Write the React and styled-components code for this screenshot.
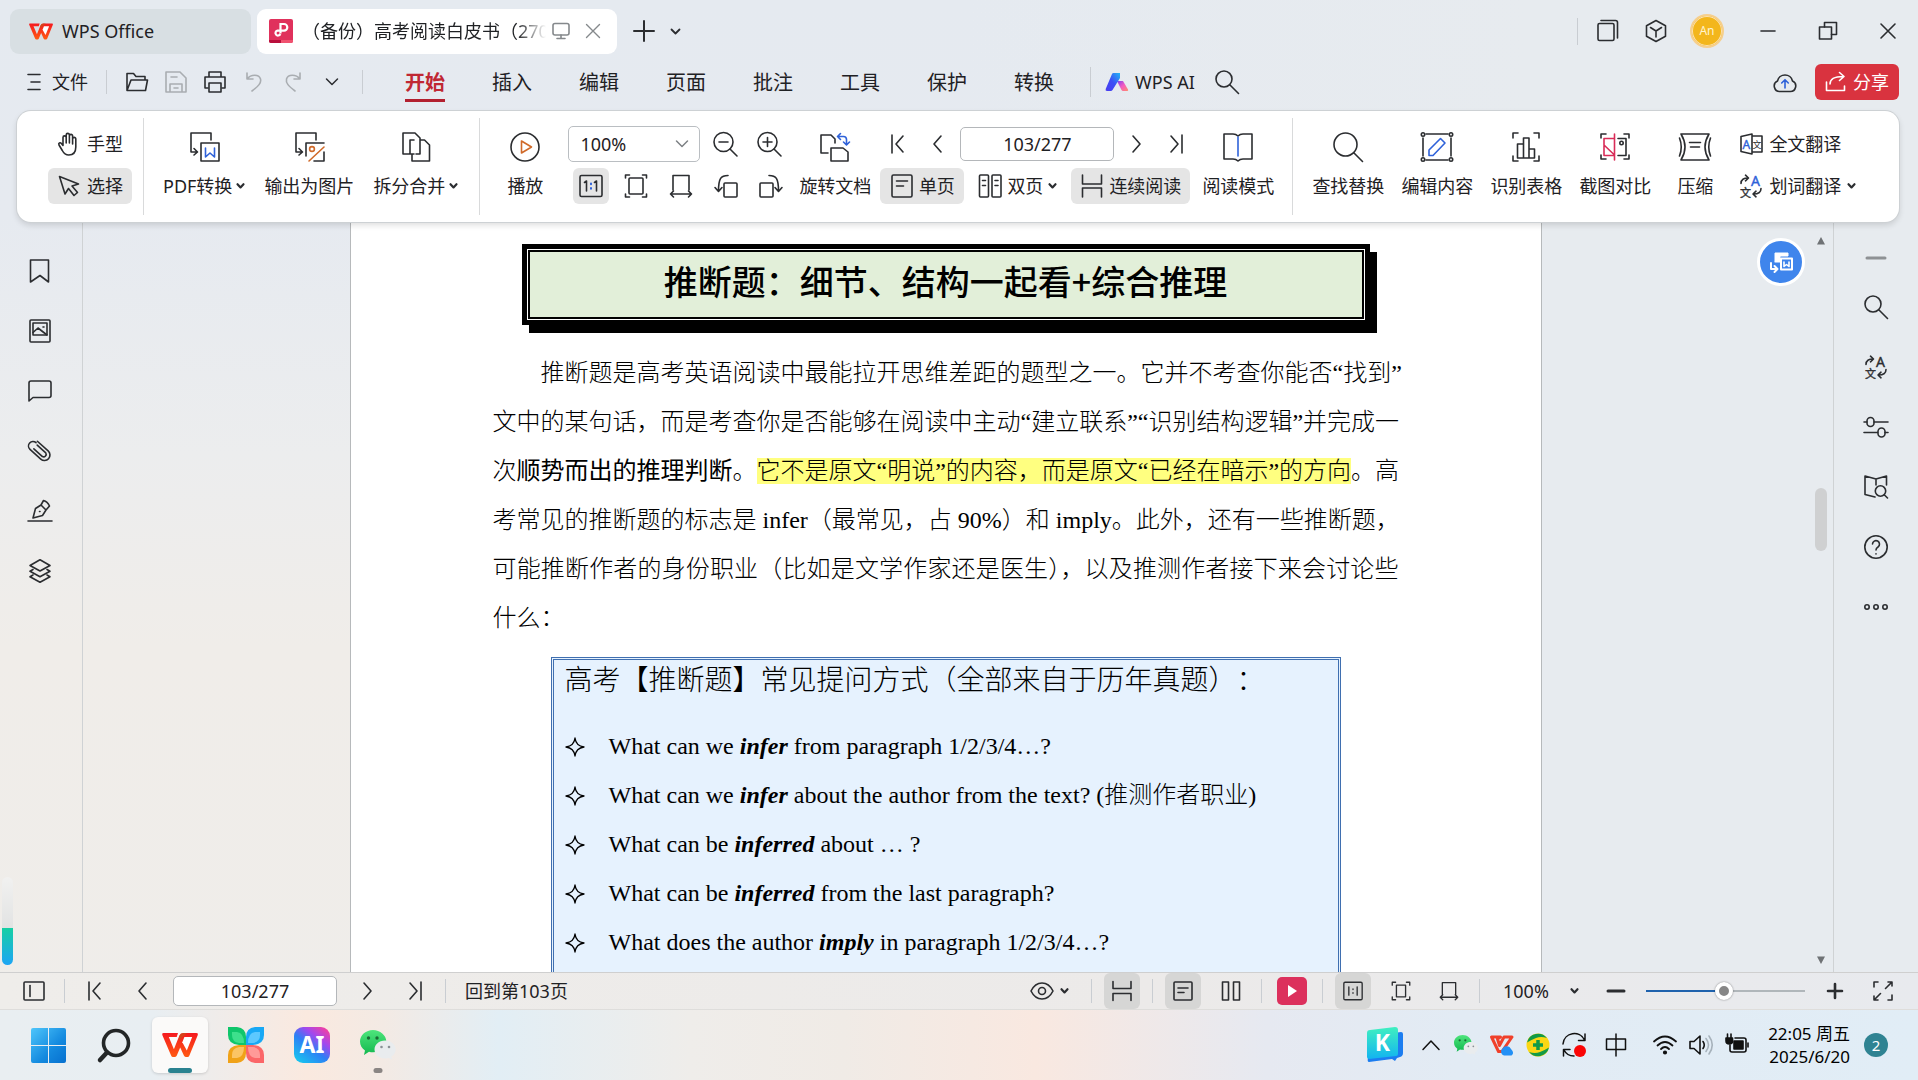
import React from "react";
import styled, { createGlobalStyle } from "styled-components";

const UI = `"Noto Sans", "Noto Sans CJK SC", sans-serif`;
const SERIF = `"Liberation Serif", "Noto Sans CJK SC", serif`;
const INK = "#2b2d30";
const BLUE = "#2f62d9";

const Global = createGlobalStyle`
  * { box-sizing: border-box; }
  body { margin: 0; font-family: ${UI}; font-size: 18px; line-height: 24px; color: #1f2124; overflow: hidden; }
  button, input, select { font: inherit; color: inherit; }
  svg { display: block; flex: none; overflow: visible; }
`;

/* ---------- shared parts ---------- */
const Shell = styled.div`
  display: flex;
  flex-direction: column;
  height: 100vh;
  min-width: 0;
  background:
    linear-gradient(90deg, rgba(231, 235, 240, 0) 50%, #e7ebef 80%),
    linear-gradient(180deg, #e5eaf0 0%, #e6eaf0 20%, #ecedee 42%, #f0ede9 60%, #efedea 100%);
`;
const Spacer = styled.div`flex: 1;`;
const Rule = styled.span`
  flex: none;
  width: 1px;
  height: ${(p) => p.$h || 24}px;
  background: #c9cdd2;
`;
const Btn = styled.button`
  display: inline-flex;
  align-items: center;
  justify-content: center;
  flex: none;
  gap: ${(p) => p.$gap || 6}px;
  min-width: ${(p) => p.$min || 36}px;
  height: 36px;
  padding: 0 ${(p) => p.$px || 0}px;
  border: 0;
  border-radius: 6px;
  background: ${(p) => (p.$on ? p.$onColor || "#e5e5e5" : "transparent")};
  white-space: nowrap;
  line-height: 36px;
`;
const Icon = ({ w = 24, h, vb, c = INK, sw = 1.6, children }) => (
  <svg width={w} height={h || w} viewBox={vb || `0 0 ${w} ${h || w}`} fill="none" stroke={c} strokeWidth={sw} strokeLinejoin="round" strokeLinecap="round" aria-hidden="true">
    {children}
  </svg>
);
const Caret = () => <Icon w={9} h={6} sw={2.2}><path d="M1.500 1.200 4.500 4.400 7.500 1.200" /></Icon>;
const Chevron = ({ c }) => <Icon w={14} h={8} c={c} sw={1.5}><path d="M1.500 1 7 6.500 12.500 1" /></Icon>;

const WpsLogo = ({ w = 24, h = 17 }) => (
  <svg width={w} height={h} viewBox="0 0 36 24" aria-hidden="true">
    <defs>
      <linearGradient id="wl" x1="0" y1="0" x2="0" y2="1"><stop offset="0" stopColor="#f5191f" /><stop offset="1" stopColor="#ff5a12" /></linearGradient>
    </defs>
    <path fill="url(#wl)" d="M1.500 0H16l-1.300 4H6.800l5.100 12.200L17 3.400Q18.400 0 21.500 0H34.500q2 0 1.300 2L27.400 22.500Q26.800 24 25.500 24h-1.800q-1.200 0-1.800-1.400L18.200 14.400l-3.400 8.200Q14.200 24 13 24h-2q-1.300 0-1.900-1.500L.3 2Q-.4 0 1.500 0Z" />
    <path fill="#fff" d="M20.300 9.200 22.400 4h7.800L24.800 17.400Z" />
    <path fill="#c9501a" d="M17 3.400Q18.400 0 21.500 0H25L19.600 5 17.400 8Z" opacity=".75" />
  </svg>
);

/* ---------- glyphs ---------- */
const First = () => <Icon w={18} h={22}><path d="M3 2v18M14 3 7 11l7 8" /></Icon>;
const Prev = () => <Icon w={18} h={22}><path d="M12 3 5 11l7 8" /></Icon>;
const Next = () => <Icon w={18} h={22}><path d="M6 3l7 8-7 8" /></Icon>;
const Last = () => <Icon w={18} h={22}><path d="M15 2v18M4 3l7 8-7 8" /></Icon>;
const OneToOne = () => (
  <Icon w={24}>
    <rect x="1" y="1.500" width="22" height="21" rx="1.500" />
    <path d="M5.500 8.500l2-1.500v10M15.500 8.500l2-1.500v10" />
    <path d="M12 9.500v.8M12 14v.8" stroke={BLUE} strokeWidth="2" />
  </Icon>
);
const FitPage = () => <Icon w={24}><path d="M1.500 4V1h4M18.500 1h4v3M22.500 20v3h-4M5.500 23h-4v-3" /><rect x="5" y="4" width="14" height="16" rx="1" /></Icon>;
const FitWidth = () => <Icon w={24}><path d="M4 16V1.500h16V16M1.500 20h21M4.500 17l-3 3 3 3M19.500 17l3 3-3 3" /></Icon>;
const SinglePage = () => <Icon w={24}><rect x="2" y="1" width="20" height="22" rx="1.500" /><path d="M6.500 7h11M6.500 12h7" /></Icon>;
const TwoPages = () => <Icon w={24}><rect x="1.500" y="1" width="9" height="22" rx="1" /><rect x="14" y="1" width="9" height="22" rx="1" /><path d="M4.500 6.500h3M4.500 11.500h3M17 6.500h3M17 11.500h3" /></Icon>;
const Continuous = () => <Icon w={24}><path d="M2.500 1v9h19V1M2.500 23v-9h19v9" /></Icon>;
const Magnifier = () => <Icon w={24}><circle cx="9" cy="9" r="8" /><path d="M15 15l8.500 8.500" /></Icon>;
const Swap = ({ blue }) => (
  <Icon w={24}>
    <path d="M2 9.500C2 5.500 5 4 9 4M6.500 1.200 9.500 4l-3 2.800M22 14.500c0 4-3 5.500-7.500 5.500M17 17.200 14 20l3 2.800" />
    <text x="12" y="12" fontFamily="Noto Sans" fontSize="14" fill={blue ? BLUE : INK} stroke={blue ? BLUE : INK} strokeWidth=".4">A</text>
    <text x="1" y="22.500" fontFamily="Noto Sans CJK SC" fontSize="11" fill={INK} stroke={INK} strokeWidth=".4">文</text>
  </Icon>
);
const WeChat = ({ w = 36 }) => (
  <svg width={w} height={w} viewBox="0 0 36 36" aria-hidden="true">
    <defs><linearGradient id="wc" x1="0" y1="0" x2="0" y2="1"><stop offset="0" stopColor="#4ee57c" /><stop offset="1" stopColor="#12b84e" /></linearGradient></defs>
    <path fill="url(#wc)" d="M13 3C6 3 0 8 0 14.500c0 3.800 2 7 5 9L4 28l5-3.200c1.300.4 2.600.5 4 .5 7.500 0 13.300-4.600 13.300-10.800S20 3 13 3Z" />
    <circle cx="8.500" cy="11" r="1.700" fill="#1a6b35" /><circle cx="17" cy="11" r="1.700" fill="#1a6b35" />
    <path fill="#e9ecee" d="M25 13.500c-6 0-10.500 4-10.500 9s4.500 9 10.500 9c1.300 0 2.500-.2 3.600-.6l3.400 1.600-.7-3c2.700-1.600 4.400-4 4.400-7 0-5-4.700-9-10.700-9Z" />
    <circle cx="21.500" cy="20" r="1.300" fill="#8a9096" /><circle cx="29" cy="20" r="1.300" fill="#8a9096" />
  </svg>
);

/* ---------- title bar ---------- */
const TitleBar = styled.header`
  display: flex;
  align-items: center;
  height: 62px;
  padding: 0 6px 0 10px;
`;
const HomeTab = styled.button`
  display: flex;
  align-items: center;
  gap: 9px;
  width: 241px;
  height: 45px;
  padding: 0 19px;
  border: 0;
  border-radius: 9px;
  background: #d8dfe3;
`;
const DocTab = styled.div`
  display: flex;
  align-items: center;
  width: 360px;
  height: 45px;
  margin: 0 9px 0 6px;
  padding: 0 11px 0 12px;
  border-radius: 9px;
  background: #fff;
`;
const DocName = styled.span`
  flex: 1;
  margin: 0 6px 0 9px;
  overflow: hidden;
  white-space: nowrap;
  mask-image: linear-gradient(90deg, #000 88%, transparent 100%);
`;
const TabTools = styled.div`
  display: flex;
  align-items: center;
  gap: 10px;
`;
const Avatar = styled.span`
  display: flex;
  align-items: center;
  justify-content: center;
  width: 34px;
  height: 34px;
  margin: 0 8px 0 4px;
  border: 2px solid #f6cf8d;
  border-radius: 50%;
  background: #f3b61c;
  box-shadow: inset 0 0 0 1px #fbe3b4;
  color: #fff3cf;
  font-size: 12px;
`;
const WindowActions = styled.div`
  display: flex;
  align-items: center;
  gap: 12px;
`;

/* ---------- menu ---------- */
const MenuBar = styled.nav`
  display: flex;
  align-items: center;
  height: 40px;
  padding: 0 19px 0 28px;
`;
const FileBtn = styled(Btn)`gap: 12px; margin-right: 18px;`;
const QuickTools = styled.div`
  display: flex;
  gap: 3px;
  margin: 0 12px;
`;
const Tabs = styled.div`
  display: flex;
  gap: 47px;
  margin: 0 36px 0 42px;
`;
const Tab = styled.button`
  height: 40px;
  padding: 2px 0 0;
  border: 0;
  background: linear-gradient(${(p) => (p.$on ? "#b3202f, #b3202f" : "transparent, transparent")}) 0 100% / 100% 3px no-repeat;
  color: ${(p) => (p.$on ? "#c02733" : "inherit")};
  font-size: 20px;
  font-weight: ${(p) => (p.$on ? 700 : 400)};
`;
const Share = styled(Btn)`
  width: 84px;
  margin-left: 12px;
  background: #d9333f;
  color: #fff;
`;

/* ---------- ribbon ---------- */
const Ribbon = styled.section`
  position: relative;
  z-index: 2;
  display: flex;
  height: 111px;
  margin: 9px 19px 0 17px;
  padding-top: 15px;
  border-radius: 14px;
  background: #fff;
  box-shadow: 0 0 0 1px #cdd1d4, 0 3px 6px rgba(0, 0, 0, 0.14);
`;
const Group = styled.div`
  display: flex;
  gap: ${(p) => p.$gap || 0}px;
  padding: 0 ${(p) => p.$pr || 0}px 0 ${(p) => p.$pl || 0}px;
`;
const GroupRule = styled(Rule)`height: 97px; margin-top: -8px; background: #d9dadb;`;
const Rows = styled.div`
  display: flex;
  flex-direction: column;
  gap: 6px;
`;
const Row = styled.div`
  display: flex;
  align-items: center;
  gap: ${(p) => p.$gap}px;
  padding-left: ${(p) => p.$pl || 0}px;
`;
const Big = styled.button`
  display: flex;
  flex-direction: column;
  align-items: center;
  gap: 6px;
  height: 78px;
  min-width: ${(p) => p.$min || 0}px;
  padding: 6px 0 0;
  border: 0;
  background: none;
  white-space: nowrap;
`;
const BigLabel = styled.span`
  display: flex;
  align-items: center;
  gap: 4px;
  line-height: 36px;
`;
const ToolBtn = styled(Btn)`
  width: ${(p) => (p.$w ? p.$w + "px" : "auto")};
  justify-content: ${(p) => (p.$start ? "flex-start" : "center")};
`;
const SelectWrap = styled.label`
  display: flex;
  align-items: center;
  width: ${(p) => p.$w}px;
  height: 36px;
  padding: 0 ${(p) => (p.$framed ? 10 : 7)}px 0 11px;
  border: ${(p) => (p.$framed ? "1px solid #babec2" : "0")};
  border-radius: 5px;
`;
const Select = styled.select`
  flex: 1;
  min-width: 0;
  padding: 0;
  border: 0;
  outline: 0;
  appearance: none;
  background: none;
`;
const PageBox = styled.input`
  width: ${(p) => p.$w}px;
  height: ${(p) => p.$h}px;
  padding: 0;
  border: 1px solid #b4b7ba;
  border-radius: 5px;
  background: #fff;
  text-align: center;
`;

function Tool({ label, caret, min, children }) {
  return (
    <Big $min={min}>
      {children}
      <BigLabel>{label}{caret && <Caret />}</BigLabel>
    </Big>
  );
}

/* ---------- body ---------- */
const Body = styled.main`
  display: flex;
  flex: 1;
  min-height: 0;
`;
const Side = styled.aside`
  display: flex;
  flex-direction: column;
  align-items: center;
  flex: none;
  gap: 20px;
  width: ${(p) => (p.$right ? 85 : 83)}px;
  padding: ${(p) => (p.$right ? "27px 0 0" : "29px 2px 0 0")};
  border-${(p) => (p.$right ? "left" : "right")}: 1px solid #cfd2d4;
`;
const SideBtn = styled(Btn)`height: ${(p) => p.$h || 40}px;`;
const Canvas = styled.div`
  position: relative;
  display: flex;
  flex: 1;
  min-width: 0;
  overflow: hidden;
`;
const Scroll = styled.div`
  flex: 1;
  display: flex;
  justify-content: center;
  align-items: flex-start;
`;
const Page = styled.article`
  width: 1192px;
  flex: none;
  padding: 22px 142px 60px;
  border: solid #b6b9bb;
  border-width: 0 1px;
  background: #fff;
  color: #000;
  font-family: ${SERIF};
`;
const Banner = styled.h1`
  height: 81px;
  margin: 0 29px 24px;
  border: 5px solid #000;
  background: #e2efd9;
  box-shadow: inset 0 0 0 1px #fff, inset 0 0 0 3px #000, 7px 8px 0 #000;
  font: 500 34px/64px "Noto Sans CJK SC", sans-serif;
  text-align: center;
`;
const Para = styled.p`
  margin: 0 0 14px;
  font-size: 24px;
  font-weight: 300;
  line-height: 49px;
`;
const Line = styled.span`
  display: block;
  padding-left: ${(p) => (p.$indent ? "2em" : 0)};
  white-space: nowrap;
  text-align: justify;
  text-align-last: ${(p) => (p.$end ? "left" : "justify")};
`;
const Mark = styled.mark`
  background: #ffff80;
  color: inherit;
`;
const Box = styled.section`
  height: 420px;
  margin: 0 58px;
  padding: 1px 11px 0;
  border: 3px double #3f6fb0;
  background: #e6f2fe;
`;
const BoxTitle = styled.h2`
  margin: 0 0 21px;
  font-size: 28px;
  font-weight: 300;
  line-height: 40px;
  white-space: nowrap;
  text-spacing-trim: space-all;
`;
const List = styled.ul`
  margin: 0;
  padding: 0;
  list-style: none;
`;
const Item = styled.li`
  display: flex;
  align-items: center;
  gap: 24px;
  font-size: 24px;
  font-weight: 300;
  line-height: 49px;
  white-space: nowrap;
`;
const Em = styled.em`font-weight: 700;`;
const ScrollBar = styled.div`
  display: flex;
  flex-direction: column;
  align-items: center;
  width: 25px;
  padding: 15px 0 8px;
`;
const Thumb = styled.span`
  width: 12px;
  height: 63px;
  margin-top: 243px;
  border-radius: 6px;
  background: #cfd0d1;
`;
const Float = styled.button`
  position: absolute;
  top: 16px;
  right: 28px;
  display: flex;
  align-items: center;
  justify-content: center;
  width: 48px;
  height: 48px;
  padding: 0;
  border: 3px solid #fff;
  border-radius: 50%;
  background: #3f85ec;
`;
const EdgeMeter = styled.div`
  position: absolute;
  left: 2px;
  bottom: 115px;
  width: 11px;
  height: 88px;
  border-radius: 6px;
  background: linear-gradient(180deg, #f1f1f0 0, #e2e3e3 58%, #16cfa4 58%, #1ea5f5 100%);
`;

/* ---------- status bar ---------- */
const Status = styled.footer`
  display: flex;
  align-items: center;
  gap: 12px;
  height: 37px;
  padding: 0 17px 1px 16px;
  border-top: 1px solid #cfcfcf;
  background: linear-gradient(90deg, #efedea, #eceae9 60%, #e8eaee);
`;
const Jump = styled.button`
  margin-left: 7px;
  padding: 0;
  border: 0;
  background: none;
`;
const Play = styled.button`
  display: flex;
  align-items: center;
  justify-content: center;
  width: 30px;
  height: 28px;
  margin: 0 3px;
  padding: 0;
  border: 0;
  border-radius: 5px;
  background: #dc305c;
`;
const Range = styled.input`
  width: 159px;
  height: 18px;
  margin: 0;
  appearance: none;
  background: linear-gradient(90deg, #1f62ad 49%, #b0b6ba 49%) center / 100% 2px no-repeat;
  &::-webkit-slider-thumb {
    appearance: none;
    width: 18px;
    height: 18px;
    border: 4px solid #fff;
    border-radius: 50%;
    background: #868686;
    box-shadow: 0 0 2px rgba(0, 0, 0, 0.45);
  }
`;

/* ---------- taskbar ---------- */
const Taskbar = styled.footer`
  display: flex;
  align-items: center;
  height: 71px;
  padding: 0 30px 0 20px;
  border-top: 1px solid #dedddb;
  background: linear-gradient(90deg, #e9eef1 0, #e8eef2 8%, #fae9df 16%, #f3eae4 20%, #e2eef5 26%, #efedea 36%, #f0ebe6 44%, #f9e8e0 54%, #e6e9f1 66%, #e2ebf4 76%, #e1edf6 100%);
`;
const Apps = styled.div`display: flex; gap: 10px;`;
const AppBtn = styled.button`
  position: relative;
  display: flex;
  align-items: center;
  justify-content: center;
  width: 56px;
  height: 56px;
  padding: 0;
  border: 0;
  border-radius: 6px;
  background: ${(p) => (p.$on ? "#fbfaf9" : "none")};
  box-shadow: ${(p) => (p.$on ? "0 1px 3px rgba(0,0,0,.15)" : "none")};
  &::after {
    content: "";
    position: absolute;
    bottom: 0;
    left: 50%;
    width: ${(p) => p.$bar || 0}px;
    height: 5px;
    border-radius: 3px;
    background: ${(p) => (p.$on ? "#2a8290" : "#8a8583")};
    translate: -50% 0;
  }
`;
const Tray = styled.div`display: flex; align-items: center; gap: 14px;`;
const TrayIcons = styled.div`
  display: flex;
  align-items: center;
  gap: 12px;
  margin-right: ${(p) => p.$mr}px;
`;
const Clock = styled.time`
  color: #000;
  font-size: 17px;
  line-height: 23px;
  text-align: right;
`;
const Badge = styled.span`
  display: flex;
  align-items: center;
  justify-content: center;
  width: 24px;
  height: 24px;
  border-radius: 50%;
  background: #2f8392;
  color: #fff;
  font-size: 15px;
`;

const tabs = ["开始", "插入", "编辑", "页面", "批注", "工具", "保护", "转换"];

const questions = [
  ["What can we ", "infer", " from paragraph 1/2/3/4…?"],
  ["What can we ", "infer", " about the author from the text? (推测作者职业)"],
  ["What can be ", "inferred", " about … ?"],
  ["What can be ", "inferred", " from the last paragraph?"],
  ["What does the author ", "imply", " in paragraph 1/2/3/4…?"],
];

function Title() {
  return (
    <TitleBar>
      <HomeTab><WpsLogo />WPS Office</HomeTab>
      <DocTab>
        <svg width="24" height="24" viewBox="0 0 24 24" aria-hidden="true">
          <rect width="24" height="24" rx="2" fill="#e0315c" /><path d="M0 21h12v3H2q-2 0-2-2Z" fill="#b90f3c" /><path d="M12 21h12v1q0 2-2 2H12Z" fill="#f0526f" />
          <path d="M11.500 14.500V5H15a3.300 3.300 0 0 1 0 6.600H8.500a2.500 2.500 0 1 0 2.800 3.400" fill="none" stroke="#fff" strokeWidth="2.200" />
        </svg>
        <DocName>（备份）高考阅读白皮书（270页）</DocName>
        <TabTools>
          <Icon w={18} c="#85898c"><rect x="1" y="1.500" width="16" height="11.500" rx="2" /><path d="M9 13v3.500M5 16.500h8" /></Icon>
          <Btn $min={26} aria-label="关闭标签"><Icon w={16} c="#85898c" sw={1.4}><path d="M1.500 1.500l13 13M14.500 1.500l-13 13" /></Icon></Btn>
        </TabTools>
      </DocTab>
      <Btn aria-label="新建"><Icon w={22} sw={2}><path d="M11 1v20M1 11h20" /></Icon></Btn>
      <Btn $min={26} aria-label="标签列表"><Icon w={11} h={7} sw={1.8}><path d="M1.500 1.500l4 4 4-4" /></Icon></Btn>
      <Spacer />
      <WindowActions>
        <Rule $h={27} />
        <Btn aria-label="窗口"><Icon w={24}><rect x="2" y="4.500" width="16" height="17" rx="1.500" /><path d="M5 1.500h14.500q2 0 2 2V19" /></Icon></Btn>
        <Btn aria-label="应用"><Icon w={24}><path d="M12 1.500l9.500 5.300v10.400L12 22.500l-9.500-5.300V6.800ZM6.500 8.500 12 12v6M12 12l5.500-3.500" /></Icon></Btn>
        <Avatar>An</Avatar>
        <Btn $min={48} aria-label="最小化"><Icon w={16}><path d="M1 8h14" /></Icon></Btn>
        <Btn $min={48} aria-label="还原"><Icon w={20}><rect x="1.500" y="6" width="12" height="12" /><path d="M6.500 6V1.500h12v12h-5" /></Icon></Btn>
        <Btn $min={48} aria-label="关闭"><Icon w={16}><path d="M1 1l14 14M15 1 1 15" /></Icon></Btn>
      </WindowActions>
    </TitleBar>
  );
}

function Menu() {
  return (
    <MenuBar>
      <FileBtn><Icon w={12} h={18}><path d="M0 1.500h12M3 9h9M0 16.500h12" /></Icon>文件</FileBtn>
      <Rule />
      <QuickTools>
        <Btn aria-label="打开"><Icon w={24}><path d="M2 20V3.500h6.500l2.500 3h9V10M2 20.500 6 10h16.500l-2 10.500Z" /></Icon></Btn>
        <Btn aria-label="保存"><Icon w={24} c="#a9adb1"><path d="M2 2h14l6 6v14H2ZM7 7h6M6 22v-8h12v8M10 18h4" /></Icon></Btn>
        <Btn aria-label="打印"><Icon w={24}><path d="M6 7V2h12v5M5 18H2V7h20v11h-3" /><rect x="6" y="13" width="12" height="9" /></Icon></Btn>
        <Btn aria-label="撤销"><Icon w={22} c="#a9adb1"><path d="M4 2v6h6M4 8c4-5 12-5 13.500 0 1 4-2 7-8.500 12" /></Icon></Btn>
        <Btn aria-label="重做"><Icon w={22} c="#a9adb1"><path d="M18 2v6h-6M18 8c-4-5-12-5-13.500 0-1 4 2 7 8.500 12" /></Icon></Btn>
        <Btn aria-label="更多"><Chevron /></Btn>
      </QuickTools>
      <Rule />
      <Tabs>{tabs.map((t, i) => <Tab key={t} $on={i === 0}>{t}</Tab>)}</Tabs>
      <Rule $h={30} />
      <Btn $px={14}>
        <svg width="24" height="18" viewBox="0 0 24 18" aria-hidden="true">
          <defs>
            <linearGradient id="ai1" x1="1" y1="0" x2="0" y2="1"><stop offset="0" stopColor="#22b5f5" /><stop offset=".5" stopColor="#3c4ff5" /><stop offset="1" stopColor="#4a3cf0" /></linearGradient>
            <linearGradient id="ai2" x1="0" y1="0" x2="1" y2="1"><stop offset="0" stopColor="#7a3ff0" /><stop offset=".5" stopColor="#f45ac0" /><stop offset="1" stopColor="#ff8d6b" /></linearGradient>
          </defs>
          <path fill="url(#ai2)" d="M12 8h6l5 8.500q.7 1.500-1 1.500h-4q-1 0-1.500-1Z" />
          <path fill="url(#ai1)" d="M8.500 0H15v5L7.500 17q-.6 1-1.700 1H2q-2 0-1.300-2L7 1q.4-1 1.500-1Z" />
        </svg>
        WPS AI
      </Btn>
      <Btn aria-label="搜索"><Magnifier /></Btn>
      <Spacer />
      <Btn aria-label="云同步">
        <Icon w={24}><path d="M7 21.500A5.500 5.500 0 0 1 4.500 11a7.700 7.700 0 0 1 15 0A5.500 5.500 0 0 1 17 21.500Z" /><path stroke={BLUE} d="M12 18v-8M8.700 13 12 9.700l3.300 3.300" /></Icon>
      </Btn>
      <Share><Icon w={22} c="#fff"><path d="M1.500 11v8.500h18V15M5 13c0-5 4-7.500 13.500-7.500M14.500 1.500l4.500 4-4.500 4" /></Icon>分享</Share>
    </MenuBar>
  );
}

function Toolbar() {
  return (
    <Ribbon>
      <Group $pl={31} $pr={11}>
        <Rows>
          <ToolBtn $w={84}><Icon w={24}><path d="M6 13V5.500a1.600 1.600 0 0 1 3.200 0V11 3a1.600 1.600 0 0 1 3.200 0v8-7a1.600 1.600 0 0 1 3.200 0v8-5a1.600 1.600 0 0 1 3.200 0v8c0 5-2.500 8-7 8-3.500 0-5-1.500-6.500-4.500L2 13c-1-2 1.200-3 2.400-1.500L6 13.500" /></Icon>手型</ToolBtn>
          <ToolBtn $w={84} $on><Icon w={24}><path d="M2.500 2.500 8 20l3.500-5.500 5.500 7 3.500-3-5.500-6.500L21.500 10Z" /></Icon>选择</ToolBtn>
        </Rows>
      </Group>
      <GroupRule />
      <Group $pl={19} $pr={21} $gap={19}>
        <Tool label="PDF转换" caret>
          <Icon w={30}><path d="M22 8V1H2v19h6M5 16.500 8.500 20 5 23" /><rect x="12" y="11" width="18" height="18" /><path stroke={BLUE} d="M16.500 16v9l4.500-4 4.500 4v-9" /></Icon>
        </Tool>
        <Tool label="输出为图片">
          <Icon w={30}><path d="M22 8V1H2v19h6M5 16.500 8.500 20 5 23" /><path d="M30 20v9H20M12 24V11h18" /><path stroke="#d06a2a" d="M15 29 30 15" /><circle cx="18" cy="17" r="2.400" stroke="#d06a2a" /></Icon>
        </Tool>
        <Tool label="拆分合并" caret>
          <Icon w={30}><path d="M8 22H2V1h12l5 5v2M13 22H9V8h4M19 22V8h4.500l5 5v16H11v-7M15 22h4" /></Icon>
        </Tool>
      </Group>
      <GroupRule />
      <Group $pl={27} $pr={18}>
        <Tool label="播放"><Icon w={30}><circle cx="15" cy="15" r="14" /><path stroke="#d06a2a" d="M11.500 9v12l10-6Z" /></Icon></Tool>
        <Group $pl={25} $pr={10}>
          <Rows>
            <Row $gap={8}>
              <SelectWrap $w={132} $framed><Select aria-label="缩放比例"><option>100%</option></Select><Chevron c="#7d8184" /></SelectWrap>
              <Btn aria-label="缩小"><Icon w={26}><circle cx="10.500" cy="11" r="9.500" /><path d="M17 18l7 7M6 11h9" /></Icon></Btn>
              <Btn aria-label="放大"><Icon w={26}><circle cx="10.500" cy="11" r="9.500" /><path d="M17 18l7 7M6 11h9M10.500 6.500v9" /></Icon></Btn>
            </Row>
            <Row $gap={9} $pl={5}>
              <Btn $on aria-label="实际大小"><OneToOne /></Btn>
              <Btn aria-label="适合页面"><FitPage /></Btn>
              <Btn aria-label="适合宽度"><FitWidth /></Btn>
              <Btn aria-label="向左旋转"><Icon w={24}><rect x="10" y="9" width="13" height="14" rx="1" /><path d="M14 1.500C7 1.500 4.500 4 4.500 17M1 13.500l3.500 4 3.500-4" /></Icon></Btn>
              <Btn aria-label="向右旋转"><Icon w={24}><rect x="1" y="9" width="13" height="14" rx="1" /><path d="M10 1.500c7 0 9.500 2.500 9.500 15.500M16 13.500l3.500 4 3.500-4" /></Icon></Btn>
            </Row>
          </Rows>
        </Group>
        <Tool label="旋转文档">
          <Icon w={30}><path d="M8 21H1V3h10l4 4v4M11 29V16h12l5 4v9Z" /><path stroke={BLUE} d="M17.500 4.500h6q3 0 3 3v5M20.500 1.500l-3 3 3 3M23.500 10l3 3 3-3" /></Icon>
        </Tool>
        <Group $pl={9} $pr={8}>
          <Rows>
            <Row $gap={4}>
              <Btn aria-label="第一页"><First /></Btn>
              <Btn aria-label="上一页"><Prev /></Btn>
              <PageBox $w={154} $h={34} aria-label="页码" defaultValue="103/277" />
              <Btn aria-label="下一页"><Next /></Btn>
              <Btn aria-label="最后一页"><Last /></Btn>
            </Row>
            <Row $gap={6}>
              <ToolBtn $w={84} $on $gap={5}><SinglePage />单页</ToolBtn>
              <ToolBtn $w={95} $gap={5}><TwoPages />双页<Caret /></ToolBtn>
              <ToolBtn $w={119} $on $gap={5}><Continuous />连续阅读</ToolBtn>
            </Row>
          </Rows>
        </Group>
        <Tool label="阅读模式">
          <Icon w={30}><path d="M15 29q-2-2-5-2H1V2h9q3 0 5 2 2-2 5-2h9v25h-9q-3 0-5 2" /><path stroke={BLUE} d="M15 5v19" /></Icon>
        </Tool>
      </Group>
      <GroupRule />
      <Group $pl={19} $gap={17}>
        <Tool label="查找替换"><Icon w={30}><circle cx="12.500" cy="12.500" r="11.500" /><path d="M21 21l8.500 8.500" /></Icon></Tool>
        <Tool label="编辑内容">
          <Icon w={34} h={30}><path d="M6 2h22M6 28h22M3 6v18M31 6v18" /><circle cx="3" cy="2.500" r="1.700" /><circle cx="31" cy="2.500" r="1.700" /><circle cx="3" cy="27.500" r="1.700" /><circle cx="31" cy="27.500" r="1.700" /><path stroke={BLUE} d="M9 23.500V18L20.500 6.500l4.500 4.500-12 12.500Z" /></Icon>
        </Tool>
        <Tool label="识别表格"><Icon w={30}><path d="M2 6V1h5M23 1h5v5M28 24v5h-5M7 29H2v-5M6.500 26V12h6v14M12.500 26V6h5.500v20M18 26V17h5.500v9ZM6.500 26h12" /></Icon></Tool>
        <Tool label="截图对比">
          <Icon w={30}><path d="M1 6V2h5M24 2h5v4M29 23v4h-5M6 27H1v-4M18 6.500h8v17h-8" /><circle cx="21.500" cy="11" r="1.700" /><path stroke="#d92c58" d="M14.500 6.500H4v17h10.500M14.500 2v26M4 13l10.500 10" /></Icon>
        </Tool>
        <Tool label="压缩" min={54}>
          <Icon w={34} h={30}><path d="M3 2h28q-8 13 0 26H3q8-13 0-26ZM11.500 10.500h11M12.500 15h9" /><path d="M1.500 6q3.500 9 0 18M32.500 6q-3.500 9 0 18" /></Icon>
        </Tool>
        <Rows>
          <ToolBtn $start>
            <Icon w={24}><path d="M2 4.500 13 2v20L2 19.500ZM13 4h10v16H13" /><text x="3.500" y="16.500" fontFamily="Noto Sans" fontSize="12" fill={BLUE} stroke={BLUE} strokeWidth=".4">A</text><text x="13.500" y="16" fontFamily="Noto Sans CJK SC" fontSize="9" fill={INK} stroke="none">文</text></Icon>
            全文翻译
          </ToolBtn>
          <ToolBtn $start><Swap blue />划词翻译<Caret /></ToolBtn>
        </Rows>
      </Group>
    </Ribbon>
  );
}

function LeftBar() {
  return (
    <Side>
      <SideBtn aria-label="书签"><Icon w={24}><path d="M2.500 1h18v22L12 16.500 2.500 23Z" /></Icon></SideBtn>
      <SideBtn aria-label="缩略图"><Icon w={24}><rect x="2" y="1" width="20" height="22" rx="1" /><rect x="5" y="4" width="14" height="12" /><path d="M5 13.500l5-4.500 9 7M15 8h1" /></Icon></SideBtn>
      <SideBtn aria-label="批注"><Icon w={24}><path d="M1 22V4q0-2 2-2h18q2 0 2 2v12.500q0 2-2 2H5Z" /></Icon></SideBtn>
      <SideBtn aria-label="附件"><Icon w={24}><path transform="rotate(-48 12 12)" d="M17.500 3.500V18a5.500 5.500 0 0 1-11 0V3.500a4.500 4.500 0 0 1 9 0" /><path transform="rotate(-48 12 12)" d="M14.500 6V17.500a2.600 2.600 0 0 1-5 0V6" /></Icon></SideBtn>
      <SideBtn aria-label="签名"><Icon w={24}><path d="M0 22h24M5 19 7.500 9.500 13 6l5 5-3.500 5.500ZM13 6l2.500-4.500q4 1 6 5.500L18 11M11.500 12.500h.5" /></Icon></SideBtn>
      <SideBtn aria-label="图层"><Icon w={24}><path d="M12 .8 22 6.500 12 12 2 6.500ZM5 10.500 2 12.300l10 5.500 10-5.500-3-1.800M5 16l-3 1.800 10 5.400 10-5.400-3-1.800" /></Icon></SideBtn>
    </Side>
  );
}

function RightBar() {
  return (
    <Side $right>
      <SideBtn $h={18} aria-label="收起"><Icon w={22} h={4} c="#8e9194" sw={3}><path d="M2 2h18" /></Icon></SideBtn>
      <SideBtn aria-label="查找"><Magnifier /></SideBtn>
      <SideBtn aria-label="翻译"><Swap /></SideBtn>
      <SideBtn aria-label="设置"><Icon w={24}><path d="M0 7h3M10 7h14M0 17.500h13.500M21 17.500h3" /><rect x="3" y="2.500" width="7" height="9" rx="3.500" /><rect x="14" y="13" width="7" height="9" rx="3.500" /></Icon></SideBtn>
      <SideBtn aria-label="词典"><Icon w={24}><path d="M11 22 1 19.500V1l11 3 10.500-3v9M12 4v6" /><circle cx="16.500" cy="16" r="5.200" /><path d="M20.500 20l3 3" /></Icon></SideBtn>
      <SideBtn aria-label="帮助"><Icon w={24}><circle cx="12" cy="12" r="11.200" /><path d="M8.500 9a3.500 3.500 0 1 1 5.500 3q-2 1.300-2 3M12 18.700v.3" /></Icon></SideBtn>
      <SideBtn aria-label="更多"><Icon w={24}><circle cx="3" cy="12" r="2.200" /><circle cx="12" cy="12" r="2.200" /><circle cx="21" cy="12" r="2.200" /></Icon></SideBtn>
    </Side>
  );
}

function Document() {
  return (
    <Page>
      <Banner>推断题：细节、结构一起看+综合推理</Banner>
      <Para>
        <Line $indent>推断题是高考英语阅读中最能拉开思维差距的题型之一。它并不考查你能否“找到”</Line>
        <Line>文中的某句话，而是考查你是否能够在阅读中主动“建立联系”“识别结构逻辑”并完成一</Line>
        <Line>次<b>顺势而出的推理判断</b>。<Mark>它不是原文“明说”的内容，而是原文“已经在暗示”的方向</Mark>。高</Line>
        <Line>考常见的推断题的标志是 infer（最常见，占 90%）和 imply。此外，还有一些推断题，</Line>
        <Line>可能推断作者的身份职业（比如是文学作家还是医生），以及推测作者接下来会讨论些</Line>
        <Line $end>什么：</Line>
      </Para>
      <Box>
        <BoxTitle>高考【推断题】常见提问方式（全部来自于历年真题）：</BoxTitle>
        <List>
          {questions.map(([a, b, c]) => (
            <Item key={a + b + c}>
              <Icon w={20} c="#000" sw={1.3}><path d="M10 1Q11 9 19 10 11 11 10 19 9 11 1 10 9 9 10 1Z" /></Icon>
              <span>{a}<Em>{b}</Em>{c}</span>
            </Item>
          ))}
        </List>
      </Box>
    </Page>
  );
}

function StatusBar() {
  const on = "#d6d6d5";
  return (
    <Status>
      <Btn aria-label="导航窗格"><Icon w={24}><rect x="2" y="3" width="20" height="18" rx="1" /><path d="M8 6.500v11" /></Icon></Btn>
      <Rule />
      <Btn aria-label="第一页"><First /></Btn>
      <Btn aria-label="上一页"><Prev /></Btn>
      <PageBox $w={164} $h={30} aria-label="当前页码" defaultValue="103/277" />
      <Btn aria-label="下一页"><Next /></Btn>
      <Btn aria-label="最后一页"><Last /></Btn>
      <Rule />
      <Jump>回到第103页</Jump>
      <Spacer />
      <ToolBtn $w={54} $px={5} $start aria-label="护眼模式"><Icon w={24} h={18}><path d="M1 9q4-8 11-8t11 8q-4 8-11 8T1 9Z" /><circle cx="12" cy="9" r="3.500" /></Icon><Caret /></ToolBtn>
      <Rule />
      <Btn $on $onColor={on} aria-label="连续阅读"><Icon w={20} h={24} vb="2 0 20 24"><path d="M3 2.500v7h18v-7M3 21.500v-7h18v7" /></Icon></Btn>
      <Rule />
      <Btn $on $onColor={on} aria-label="单页"><Icon w={20}><rect x="1" y="1" width="18" height="18" rx="1" /><path d="M5 7h10M5 11.500h6" /></Icon></Btn>
      <Btn aria-label="双页"><Icon w={20}><rect x="1.500" y="1" width="6" height="18" /><rect x="12.500" y="1" width="6" height="18" /></Icon></Btn>
      <Rule />
      <Play aria-label="播放"><svg width="10" height="12" aria-hidden="true"><path d="M1 0l9 6-9 6Z" fill="#fff" /></svg></Play>
      <Rule />
      <Btn $on $onColor={on} aria-label="实际大小"><Icon w={20} vb="0 0 24 24"><rect x="1" y="1.500" width="22" height="21" rx="1.500" /><path d="M7 7v10M17 7v10M12 9.500v.8M12 14v.8" /></Icon></Btn>
      <Btn aria-label="适合页面"><Icon w={20} vb="0 0 24 24"><path d="M1.500 5V1.500h4M18.500 1.500h4V5M22.500 19v3.500h-4M5.500 22.500h-4V19" /><rect x="6.500" y="5" width="11" height="14" /></Icon></Btn>
      <Btn aria-label="适合宽度"><Icon w={20} vb="0 0 24 24"><path d="M4 16V2h16v14M1.500 19.500h21M4.500 16.500l-3 3 3 3M19.500 16.500l3 3-3 3" /></Icon></Btn>
      <Rule />
      <SelectWrap $w={94}><Select aria-label="显示比例"><option>100%</option></Select><Caret /></SelectWrap>
      <Btn aria-label="缩小"><Icon w={20} sw={3}><path d="M2 10h16" /></Icon></Btn>
      <Range type="range" min="0" max="100" defaultValue="49" aria-label="缩放" />
      <Btn aria-label="放大"><Icon w={18} sw={2.6}><path d="M2 9h14M9 2v14" /></Icon></Btn>
      <Btn aria-label="全屏"><Icon w={20}><path d="M1 6V1h4M15 1h4v4M19 14v5h-4M5 19H1v-4M12.500 7.500 19 1M1 19l6.500-6.500" /></Icon></Btn>
    </Status>
  );
}

function WindowsBar() {
  return (
    <Taskbar>
      <Apps>
        <AppBtn aria-label="开始">
          <svg width="35" height="35" viewBox="0 0 35 35" aria-hidden="true">
            <defs><linearGradient id="win" gradientUnits="userSpaceOnUse" x1="0" y1="0" x2="35" y2="35"><stop offset="0" stopColor="#4fc6fb" /><stop offset=".6" stopColor="#148adf" /><stop offset="1" stopColor="#0670cf" /></linearGradient></defs>
            <path fill="url(#win)" d="M2 0h15v17H0V2q0-2 2-2ZM18 0h15q2 0 2 2v15H18ZM0 18h17v17H2q-2 0-2-2ZM18 18h17v15q0 2-2 2H18Z" />
          </svg>
        </AppBtn>
        <AppBtn aria-label="搜索"><Icon w={34} c="#232627" sw={3.6}><circle cx="19" cy="15" r="12.500" /><path d="M10 24.500 3 32" strokeWidth="4.500" /></Icon></AppBtn>
        <AppBtn $on $bar={24} aria-label="WPS Office"><WpsLogo w={36} h={24} /></AppBtn>
        <AppBtn aria-label="应用中心">
          <svg width="36" height="36" viewBox="0 0 36 36" aria-hidden="true">
            <path fill="#10c66b" d="M0 0h9q9 1 9 10v8h-7Q0 17 0 8Z" /><path fill="#3ee08c" d="M4 5h5q7 1 7 11h-5Q4 15 4 8Z" />
            <path fill="#18a8f5" d="M36 0h-9q-9 1-9 10v8h7q11-1 11-10Z" /><path fill="#5cc8ff" d="M32 5h-5q-7 1-7 11h5q7-1 7-8Z" />
            <path fill="#f0a218" d="M0 36h9q9-1 9-10v-8h-7Q0 19 0 28Z" /><path fill="#fbc465" d="M4 31h5q7-1 7-11h-5q-7 1-7 8Z" />
            <path fill="#fb6668" d="M36 36h-9q-9-1-9-10v-8h7q11 1 11 10Z" /><path fill="#ff9a98" d="M32 31h-5q-7-1-7-11h5q7 1 7 8Z" />
          </svg>
        </AppBtn>
        <AppBtn aria-label="AI 助手">
          <svg width="36" height="36" viewBox="0 0 36 36" aria-hidden="true">
            <defs><linearGradient id="aib" x1=".1" y1="1" x2=".9" y2="0"><stop offset="0" stopColor="#17c9ee" /><stop offset=".45" stopColor="#2d7ff5" /><stop offset=".7" stopColor="#a248ee" /><stop offset="1" stopColor="#fb3f9a" /></linearGradient></defs>
            <rect width="36" height="36" rx="9" fill="url(#aib)" />
            <text x="18" y="26" textAnchor="middle" fontFamily="Noto Sans" fontWeight="700" fontSize="23" fill="#fff">AI</text>
          </svg>
        </AppBtn>
        <AppBtn $bar={9} aria-label="微信"><WeChat /></AppBtn>
      </Apps>
      <Spacer />
      <Tray>
        <TrayIcons $mr={5}>
          <svg width="36" height="36" viewBox="0 0 36 36" aria-hidden="true">
            <defs><linearGradient id="kk" x1="0" y1="0" x2="0" y2="1"><stop offset="0" stopColor="#3ff0c0" /><stop offset="1" stopColor="#12b4f0" /></linearGradient></defs>
            <path d="M12 8 34 5q2 0 2 2v19q0 3-3 4l-3 1-2 3-3-2L2 35q-2 0-1-4Z" fill="#1c7df0" />
            <path d="M3 3 28 0q3 0 3 3v24q0 2-2 2L2 32q-2 0-2-2V6q0-3 3-3Z" fill="url(#kk)" />
            <text x="15.500" y="24" textAnchor="middle" fontFamily="Noto Sans" fontWeight="700" fontSize="23" fill="#fff">K</text>
          </svg>
        </TrayIcons>
        <Icon w={18} h={12} c="#111" sw={1.5}><path d="M1 10.500 9 2l8 8.500" /></Icon>
        <TrayIcons $mr={5}>
          <WeChat w={24} />
          <svg width="24" height="24" viewBox="0 0 24 24" aria-hidden="true"><path d="M1.500 4h9L7.500 6l2 6.500L14 4h8L12 18.500H8.500Z" fill="none" stroke="#f0402a" strokeWidth="3" strokeLinejoin="round" /><path d="M14 22.500a4 4 0 0 1-1.500-7 5 5 0 0 1 7-1.500l3 4a3.500 3.500 0 0 1-1 4.500Z" fill="#2390f5" /></svg>
          <svg width="24" height="24" viewBox="0 0 24 24" aria-hidden="true"><circle cx="12" cy="12" r="11.500" fill="#fbd714" /><path d="M1 9.500A11.500 11.500 0 0 1 21 5q-6-2-11 0T1 9.500ZM23 14.500A11.500 11.500 0 0 1 3 19q6 2 11 0t9-4.500Z" fill="#129a48" /><path d="M12 7v10M7 12h10" stroke="#129a48" strokeWidth="3.500" /></svg>
          <Icon w={24} c="#111" sw={1.5}><path d="M1 11C2 -1 18-3 22.500 7M23 1v6.500h-6.500M1.500 23v-6.500H8M2 17c2 4 6 6 10 6" /><circle cx="18" cy="18" r="6" fill="#fa0505" stroke="none" /></Icon>
        </TrayIcons>
        <TrayIcons $mr={12}>
          <Icon w={22} c="#111" sw={1.5}><path d="M1.500 5h19v10.500h-19ZM11 0v22" /></Icon>
        </TrayIcons>
        <TrayIcons $mr={5}>
          <Icon w={24} c="#111" sw={1.8}><path d="M1 8.500q11-10 22 0M4.500 12.500q7.500-7 15 0M8 16q4-4 8 0" /><circle cx="12" cy="19.500" r="1.200" fill="#111" /></Icon>
          <Icon w={24} c="#111"><path d="M1 8.500h4L11 3v18l-6-5.500H1ZM14 8.500q2.500 3.500 0 7" /><path stroke="#a7b2bb" d="M17 5.500q5 6.500 0 13M20 3q6.500 9 0 18" /></Icon>
          <Icon w={24} c="#111"><path d="M10 5h9q2 0 2 2v10q0 2-2 2H7q-2 0-2-2v-5M2.500 1v4M6 1v4M23 10v4" /><rect x="9" y="8" width="9" height="8" fill="#111" /><path d="M1 5h6.500v3q0 3-3.200 3T1 8Z" fill="#111" /></Icon>
        </TrayIcons>
        <Clock>22:05 周五<br />2025/6/20</Clock>
        <Badge>2</Badge>
      </Tray>
    </Taskbar>
  );
}

export default function App() {
  return (
    <Shell>
      <Global />
      <Title />
      <Menu />
      <Toolbar />
      <Body>
        <LeftBar />
        <Canvas>
          <Scroll><Document /></Scroll>
          <ScrollBar>
            <svg width="8" height="8" aria-hidden="true"><path d="M4 0l4 7.500H0Z" fill="#6f7275" /></svg>
            <Thumb />
            <Spacer />
            <svg width="8" height="8" aria-hidden="true"><path d="M4 8 0 .5h8Z" fill="#6f7275" /></svg>
          </ScrollBar>
          <Float aria-label="转为 Word">
            <Icon w={24} c="#fff" sw={2}><path d="M6 11V3h13v3h-8v6H6Z" fill="#fff" strokeWidth="1" /><path d="M2 13v6h6M5.500 16l3 3-3 3" /><rect x="12" y="8.500" width="11" height="11" fill="#3f85ec" /><path d="M15 12v4.500l2.500-2 2.500 2V12" strokeWidth="1.600" /></Icon>
          </Float>
        </Canvas>
        <RightBar />
      </Body>
      <StatusBar />
      <WindowsBar />
      <EdgeMeter />
    </Shell>
  );
}
